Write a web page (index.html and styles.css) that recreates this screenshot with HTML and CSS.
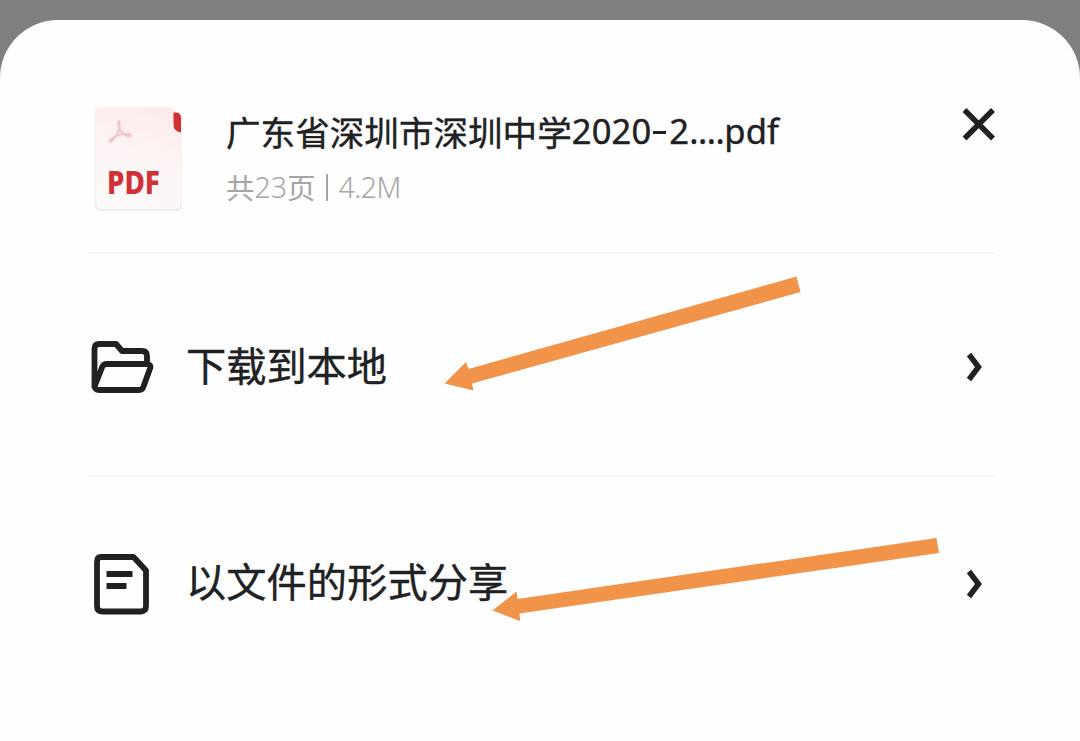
FILE: index.html
```html
<!DOCTYPE html>
<html lang="zh-CN">
<head>
<meta charset="utf-8">
<title>分享</title>
<link rel="stylesheet" href="styles.css">
</head>
<body>
<main class="sheet">
  <header class="file">
    <svg class="file-icon" viewBox="0 0 90 106" role="img" aria-label="PDF">
      <defs>
        <linearGradient id="paper" x1=".7" y1="0" x2=".45" y2="1">
          <stop offset="0" stop-color="#fdeaea"/>
          <stop offset=".5" stop-color="#fef5f5"/>
          <stop offset="1" stop-color="#fbf9f9"/>
        </linearGradient>
      </defs>
      <path d="M6 1.500H76L87.500 10V98Q87.500 104 82 104H6Q1.500 104 1.500 99V6Q1.500 1.500 6 1.500Z" fill="url(#paper)" stroke="#f6f1f1"/>
      <path d="M2 97Q2 104 8 104H82Q87 104 87 99" fill="none" stroke="#ece8e8" stroke-width="1.500"/>
      <path d="M79.500 6.500H82Q87 6.500 87 12V26.500Q79.500 25 79.500 19Z" fill="#d13036"/>
      <path d="M25.500 17C26.500 23 22 31 17.500 35.500C15 37 15 33.500 19 31.500C24 28.500 30 27 36 28C38.500 29 34.500 31.500 31.500 29.500C28 27 25 22 24.300 17.500C23.500 14.500 25.500 14.500 25.500 17Z" fill="none" stroke="#f1c6c9" stroke-width="2"/>
      <text class="pdf-mark" x="13" y="87.500" textLength="53" lengthAdjust="spacingAndGlyphs">PDF</text>
    </svg>
    <div class="file-text">
      <h1 class="file-name">广东省深圳市深圳中学<span class="latin">2020</span><span class="dash"></span><span class="latin">2</span><span class="dots">....</span><span class="latin">pdf</span></h1>
      <p class="file-meta">共<span class="latin">23</span>页<span class="bar"></span><span class="size">4.2M</span></p>
    </div>
    <svg class="close" viewBox="0 0 34 34"><path d="M2.500 3L31 31.500M31 3L2.500 31.500"/></svg>
  </header>
  <section class="row">
    <svg class="icon" viewBox="0 0 66 62">
      <path d="M6.500 52V13Q6.500 8 11 8H28L34 15H54Q59 15 59 20V28M6 52L14 31.500Q15 28 19 28H58Q63.500 28 62.200 32L55.500 50.500Q54.500 54 51 54H11Q6 54 6.500 48"/>
    </svg>
    <span class="label">下载到本地</span>
    <svg class="chevron" viewBox="0 0 18 30"><path d="M3 2.500L12.500 15L3 27.500"/></svg>
  </section>
  <section class="row row-share">
    <svg class="icon" viewBox="0 0 66 62">
      <path d="M13 4H45.500L58 17.500V53Q58 58.500 52.500 58.500H14Q9 58.500 9 53V9Q9 4 13 4ZM18.500 21H44.500M18.500 33H38.500"/>
    </svg>
    <span class="label">以文件的形式分享</span>
    <svg class="chevron" viewBox="0 0 18 30"><path d="M3 2.500L12.500 15L3 27.500"/></svg>
  </section>
</main>
<svg class="arrows" viewBox="0 0 1080 741">
  <path d="M444.500 383.500L466 362L468.500 369L796.500 276.500L800.500 292L472 383.500L473.500 390.500Z"/>
  <path d="M492.500 610.500L516.500 591.500L517.500 599L936.500 538L939 553L519.500 613.500L520 621Z"/>
</svg>
</body>
</html>
```

FILE: styles.css
```css
* {
  box-sizing: border-box;
}

body {
  margin: 0;
  height: 741px;
  padding-top: 19.500px;
  overflow: hidden;
  background: #808080;
  color: #202123;
  font-family: "Noto Sans CJK SC", sans-serif;
}

.sheet {
  height: 722px;
  padding: 0 84px 0 88px;
  border-radius: 58px 58px 0 0;
  background: #fefefe;
}

.file {
  display: flex;
  align-items: flex-start;
  height: 234.500px;
  padding-top: 86.500px;
  border-bottom: 2px solid #f5f5f5;
}

.file-icon {
  width: 90px;
  height: 106px;
  margin-left: 6px;
}

.pdf-mark {
  fill: #d13036;
  font: 800 32px "Noto Sans", sans-serif;
}

.file-text {
  flex: 1;
  margin-left: 42px;
}

.file-name,
.file-meta {
  display: flex;
  align-items: center;
  margin: 0;
  white-space: nowrap;
}

.file-name {
  height: 49px;
  font-size: 34.600px;
  font-weight: 400;
  -webkit-text-stroke: .4px #202123;
}

.latin,
.size,
.dots {
  font-family: "Noto Sans", sans-serif;
}

.file-name .latin {
  letter-spacing: .1px;
}

.dash {
  width: 13px;
  height: 3px;
  margin: 4px 3px 0 2px;
  background: #202123;
}

.dots {
  letter-spacing: -.500px;
}

.file-meta {
  height: 63px;
  color: #a5a5a5;
  font-size: 28.500px;
}

.file-meta .latin,
.size {
  font-weight: 300;
}

.size {
  letter-spacing: -.500px;
}

.bar {
  width: 2px;
  height: 27px;
  margin: 2px 11px 0 10px;
  background: #a8a8a8;
}

.close {
  width: 34px;
  height: 34px;
  margin-top: 1px;
  fill: none;
  stroke: #202123;
  stroke-width: 5.500;
}

.row {
  display: flex;
  align-items: center;
  height: 223px;
  padding-top: 5px;
  border-bottom: 2px solid #f5f5f5;
}

.row-share {
  height: 214px;
  padding-top: 0;
  border-bottom: 0;
}

.icon {
  width: 66px;
  height: 62px;
  fill: none;
  stroke: #202123;
  stroke-width: 5.800;
  stroke-linejoin: round;
}

.label {
  flex: 1;
  margin: 0 0 7px 32px;
  font-size: 40.200px;
  font-weight: 400;
  line-height: 60px;
  -webkit-text-stroke: .4px #202123;
}

.row-share .label {
  margin-bottom: 9px;
  letter-spacing: .1px;
}

.chevron {
  width: 18px;
  height: 30px;
  margin-right: 12px;
  fill: none;
  stroke: #202123;
  stroke-width: 5.500;
}

.arrows {
  position: absolute;
  inset: 0;
  width: 1080px;
  height: 741px;
  fill: #f2934a;
  pointer-events: none;
}
```
